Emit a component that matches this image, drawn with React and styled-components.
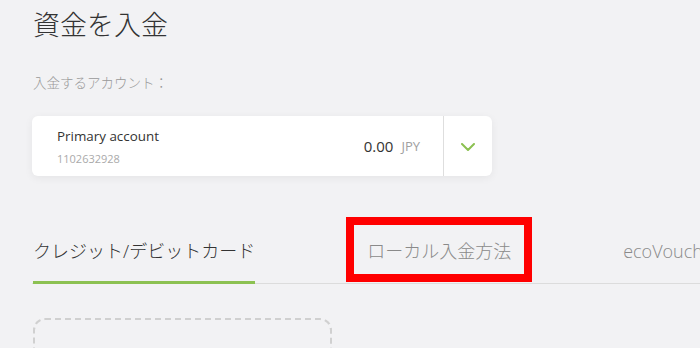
import React from "react";
import styled, { createGlobalStyle } from "styled-components";

const Global = createGlobalStyle`
  html, body {
    margin: 0;
    padding: 0;
    background: #f2f2f4;
    overflow: hidden;
  }
  body {
    font-family: "Open Sans", "Noto Sans CJK JP", sans-serif;
    color: #333;
  }
`;

const Page = styled.div`
  padding: 7px 0 0 32px;
  width: 700px;
  height: 348px;
  box-sizing: border-box;
  overflow: hidden;
`;

const Title = styled.h1`
  margin: 0;
  font-size: 27px;
  line-height: 35px;
  font-weight: 300;
  color: #333;
  padding-left: 1px;
`;

const Label = styled.div`
  margin-top: 31px;
  font-size: 13.5px;
  line-height: 20px;
  font-weight: 300;
  color: #999;
  padding-left: 1px;
`;

const Card = styled.div`
  margin-top: 23px;
  width: 460px;
  height: 60px;
  background: #fff;
  border-radius: 6px;
  box-shadow: 0 2px 8px rgba(0, 0, 0, 0.06);
  display: flex;
  align-items: stretch;
`;

const AccountInfo = styled.div`
  flex: 1;
  padding: 11px 0 0 25px;
`;

const AccountName = styled.div`
  font-size: 13.4px;
  line-height: 18px;
  color: #333;
`;

const AccountNumber = styled.div`
  margin-top: 6px;
  font-size: 11px;
  line-height: 16px;
  color: #aaa;
`;

const Balance = styled.div`
  display: flex;
  align-items: center;
  gap: 8px;
  padding-right: 23px;
`;

const Amount = styled.span`
  font-size: 15px;
  color: #333;
`;

const Currency = styled.span`
  font-size: 13px;
  color: #a0a0a0;
`;

const Toggle = styled.div`
  width: 48px;
  border-left: 1px solid #dedede;
  display: flex;
  align-items: center;
  justify-content: center;
  padding-top: 2px;
`;

const TabList = styled.div`
  margin-top: 63px;
  display: flex;
  gap: 112px;
  border-bottom: 1px solid #dcdcdc;
  white-space: nowrap;
`;

const Tab = styled.div`
  position: relative;
  flex-shrink: 0;
  font-size: 18px;
  line-height: 24px;
  font-weight: 300;
  padding: 0 0 18px;
  color: ${(p) => (p.$active ? "#333" : "#8a8a8a")};
  border-bottom: 3px solid ${(p) => (p.$active ? "#8cc152" : "transparent")};
  margin-bottom: -1px;
  margin-left: ${(p) => (p.$first ? "1px" : "0")};
`;

const Highlight = styled.div`
  position: absolute;
  left: -21px;
  top: -22px;
  width: 186px;
  height: 65px;
  box-sizing: border-box;
  border: 8px solid #ff0000;
  pointer-events: none;
`;

const DropZone = styled.div`
  margin: 34px 0 0 1px;
  width: 299px;
  height: 90px;
  box-sizing: border-box;
  border: 2px dashed #d0d0d0;
  border-radius: 12px;
`;

const Chevron = () => (
  <svg width="14" height="8" viewBox="0 0 14 8" fill="none">
    <polyline
      points="1,1 7,7 13,1"
      stroke="#8cc152"
      strokeWidth="2"
      strokeLinecap="round"
      strokeLinejoin="round"
    />
  </svg>
);

export default function App() {
  return (
    <>
      <Global />
      <Page>
        <Title>資金を入金</Title>
        <Label>入金するアカウント：</Label>
        <Card>
          <AccountInfo>
            <AccountName>Primary account</AccountName>
            <AccountNumber>1102632928</AccountNumber>
          </AccountInfo>
          <Balance>
            <Amount>0.00</Amount>
            <Currency>JPY</Currency>
          </Balance>
          <Toggle>
            <Chevron />
          </Toggle>
        </Card>
        <TabList>
          <Tab $active $first>クレジット/デビットカード</Tab>
          <Tab>
            ローカル入金方法
            <Highlight />
          </Tab>
          <Tab>ecoVoucher</Tab>
        </TabList>
        <DropZone />
      </Page>
    </>
  );
}
